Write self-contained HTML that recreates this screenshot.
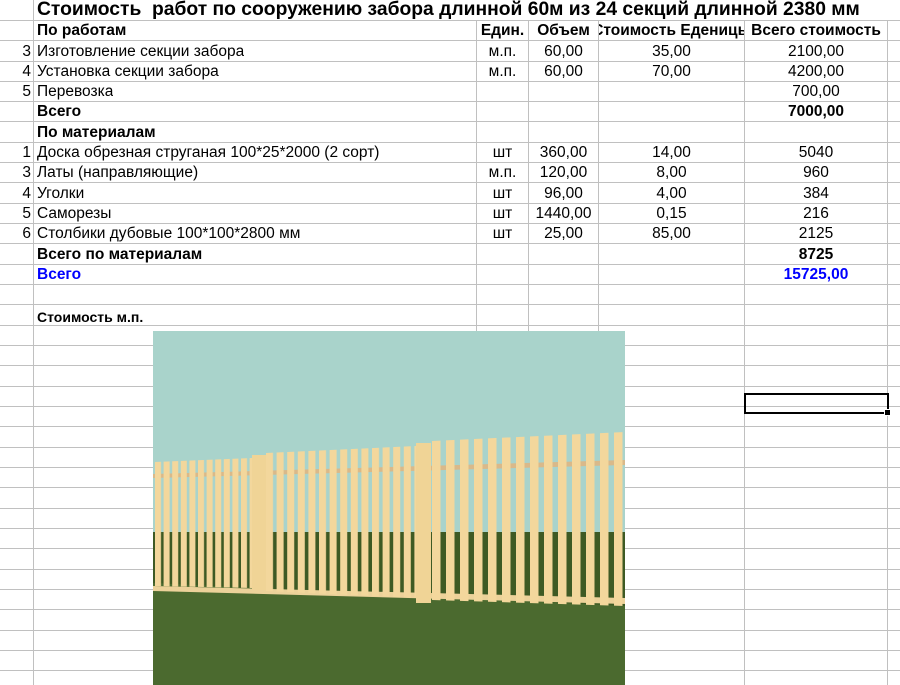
<!DOCTYPE html>
<html><head><meta charset="utf-8"><style>
body{margin:0;width:900px;height:685px;overflow:hidden;background:#fff;font-family:"Liberation Sans",Arial,sans-serif;font-size:15.5px;color:#000;position:relative}
.h{position:absolute;left:0;width:900px;height:1px;background:#c0c0c0}
.v{position:absolute;top:20px;width:1px;height:665px;background:#c0c0c0}
.t{position:absolute;height:20px;line-height:22px;white-space:nowrap;overflow:hidden}
.r{text-align:right}.c{text-align:center}.b{font-weight:bold}
.f{display:flex;justify-content:center}
</style></head><body>
<div class="h" style="top:20px"></div><div class="h" style="top:40px"></div><div class="h" style="top:61px"></div><div class="h" style="top:81px"></div><div class="h" style="top:101px"></div><div class="h" style="top:121px"></div><div class="h" style="top:142px"></div><div class="h" style="top:162px"></div><div class="h" style="top:182px"></div><div class="h" style="top:203px"></div><div class="h" style="top:223px"></div><div class="h" style="top:243px"></div><div class="h" style="top:264px"></div><div class="h" style="top:284px"></div><div class="h" style="top:304px"></div><div class="h" style="top:325px"></div><div class="h" style="top:345px"></div><div class="h" style="top:365px"></div><div class="h" style="top:386px"></div><div class="h" style="top:406px"></div><div class="h" style="top:426px"></div><div class="h" style="top:447px"></div><div class="h" style="top:467px"></div><div class="h" style="top:487px"></div><div class="h" style="top:508px"></div><div class="h" style="top:528px"></div><div class="h" style="top:548px"></div><div class="h" style="top:569px"></div><div class="h" style="top:589px"></div><div class="h" style="top:609px"></div><div class="h" style="top:630px"></div><div class="h" style="top:650px"></div><div class="h" style="top:670px"></div>
<div class="v" style="left:33px;top:0;height:685px"></div><div class="v" style="left:476px"></div><div class="v" style="left:528px"></div><div class="v" style="left:598px"></div><div class="v" style="left:744px"></div><div class="v" style="left:887px"></div>
<div class="t b" style="left:37px;top:0;font-size:19.3px;line-height:20px;background:#fff;width:863px">Стоимость&nbsp; работ по сооружению забора длинной 60м из 24 секций длинной 2380 мм</div>

<div class="t b" style="left:37px;top:20px">По работам</div>
<div class="t b c" style="left:477px;top:20px;width:51px">Един.</div>
<div class="t b c" style="left:529px;top:20px;width:69px">Объем</div>
<div class="t b f" style="left:599px;top:20px;width:145px"><span>Стоимость Еденицы</span></div>
<div class="t b c" style="left:745px;top:20px;width:142px">Всего стоимость</div>

<div class="t r" style="left:0;top:41px;width:31px">3</div><div class="t" style="left:37px;top:41px">Изготовление секции забора</div><div class="t c" style="left:477px;top:41px;width:51px">м.п.</div><div class="t c" style="left:529px;top:41px;width:69px">60,00</div><div class="t c" style="left:599px;top:41px;width:145px">35,00</div><div class="t c" style="left:745px;top:41px;width:142px">2100,00</div>
<div class="t r" style="left:0;top:61px;width:31px">4</div><div class="t" style="left:37px;top:61px">Установка секции забора</div><div class="t c" style="left:477px;top:61px;width:51px">м.п.</div><div class="t c" style="left:529px;top:61px;width:69px">60,00</div><div class="t c" style="left:599px;top:61px;width:145px">70,00</div><div class="t c" style="left:745px;top:61px;width:142px">4200,00</div>
<div class="t r" style="left:0;top:81px;width:31px">5</div><div class="t" style="left:37px;top:81px">Перевозка</div><div class="t c" style="left:745px;top:81px;width:142px">700,00</div>
<div class="t b" style="left:37px;top:101px">Всего</div><div class="t c b" style="left:745px;top:101px;width:142px">7000,00</div>
<div class="t b" style="left:37px;top:122px">По материалам</div>
<div class="t r" style="left:0;top:142px;width:31px">1</div><div class="t" style="left:37px;top:142px">Доска обрезная струганая 100*25*2000 (2 сорт)</div><div class="t c" style="left:477px;top:142px;width:51px">шт</div><div class="t c" style="left:529px;top:142px;width:69px">360,00</div><div class="t c" style="left:599px;top:142px;width:145px">14,00</div><div class="t c" style="left:745px;top:142px;width:142px">5040</div>
<div class="t r" style="left:0;top:162px;width:31px">3</div><div class="t" style="left:37px;top:162px">Латы (направляющие)</div><div class="t c" style="left:477px;top:162px;width:51px">м.п.</div><div class="t c" style="left:529px;top:162px;width:69px">120,00</div><div class="t c" style="left:599px;top:162px;width:145px">8,00</div><div class="t c" style="left:745px;top:162px;width:142px">960</div>
<div class="t r" style="left:0;top:183px;width:31px">4</div><div class="t" style="left:37px;top:183px">Уголки</div><div class="t c" style="left:477px;top:183px;width:51px">шт</div><div class="t c" style="left:529px;top:183px;width:69px">96,00</div><div class="t c" style="left:599px;top:183px;width:145px">4,00</div><div class="t c" style="left:745px;top:183px;width:142px">384</div>
<div class="t r" style="left:0;top:203px;width:31px">5</div><div class="t" style="left:37px;top:203px">Саморезы</div><div class="t c" style="left:477px;top:203px;width:51px">шт</div><div class="t c" style="left:529px;top:203px;width:69px">1440,00</div><div class="t c" style="left:599px;top:203px;width:145px">0,15</div><div class="t c" style="left:745px;top:203px;width:142px">216</div>
<div class="t r" style="left:0;top:223px;width:31px">6</div><div class="t" style="left:37px;top:223px">Столбики дубовые 100*100*2800 мм</div><div class="t c" style="left:477px;top:223px;width:51px">шт</div><div class="t c" style="left:529px;top:223px;width:69px">25,00</div><div class="t c" style="left:599px;top:223px;width:145px">85,00</div><div class="t c" style="left:745px;top:223px;width:142px">2125</div>
<div class="t b" style="left:37px;top:244px">Всего по материалам</div><div class="t c b" style="left:745px;top:244px;width:142px">8725</div>
<div class="t b" style="left:37px;top:264px;color:#0000ff">Всего</div><div class="t c b" style="left:745px;top:264px;width:142px;color:#0000ff">15725,00</div>
<div class="t b" style="left:37px;top:306px;font-size:14px">Стоимость м.п.</div>

<div style="position:absolute;left:744px;top:393px;width:141px;height:17px;border:2px solid #000"></div>
<div style="position:absolute;left:884px;top:409px;width:5px;height:5px;background:#000;border:1px solid #fff"></div>

<svg style="position:absolute;left:153px;top:331px" width="472" height="354" viewBox="153 331 472 354">
<defs>
<pattern id="p1" x="155" y="0" width="8.6" height="10" patternUnits="userSpaceOnUse"><rect width="6" height="10" fill="#f3d79c"/></pattern>
<pattern id="p2" x="266" y="0" width="10.6" height="10" patternUnits="userSpaceOnUse"><rect width="7" height="10" fill="#f3d79c"/></pattern>
<pattern id="p3" x="432" y="0" width="14" height="10" patternUnits="userSpaceOnUse"><rect width="8.5" height="10" fill="#f3d79c"/></pattern>
</defs>
<rect x="153" y="331" width="472" height="354" fill="#a9d3cb"/>
<rect x="153" y="532" width="472" height="80" fill="#3e5a24"/>
<polygon points="153,583 625,606 625,685 153,685" fill="#4b6a2f"/>
<polygon points="153,474 625,460 625,465 153,478" fill="#d9b98a"/>
<polygon points="153,586 625,598 625,604 153,591" fill="#ecd29a"/>
<polygon points="155,462 252,458 252,588 155,586" fill="url(#p1)"/>
<rect x="252" y="455" width="14" height="135" fill="#f0d496"/>
<polygon points="266,453 416,446 416,598 266,591" fill="url(#p2)"/>
<rect x="416" y="443" width="15" height="160" fill="#f0d496"/>
<polygon points="432,441 625,432 625,606 432,600" fill="url(#p3)"/>
</svg>
</body></html>
